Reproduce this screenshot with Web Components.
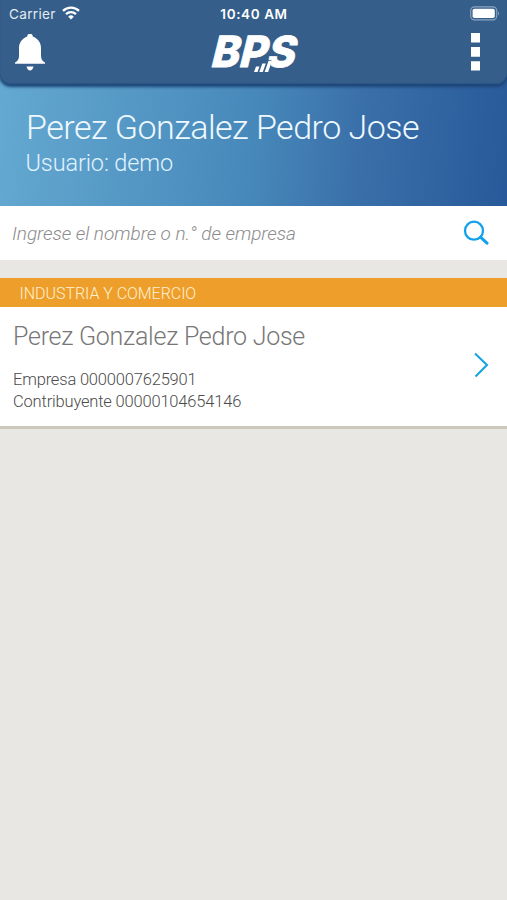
<!DOCTYPE html>
<html lang="es">
<head>
<meta charset="utf-8">
<title>BPS</title>
<style>
html,body{margin:0;height:100%}
body{background:#e8e7e3;font-family:Roboto,"Liberation Sans",sans-serif;font-weight:300}
</style>
</head>
<body>
<bps-app></bps-app>
<script>
const define = (name, html) => {
  const t = document.createElement('template');
  t.innerHTML = html;
  customElements.define(name, class extends HTMLElement {
    constructor() {
      super();
      this.attachShadow({mode: 'open'}).append(t.content.cloneNode(true));
    }
  });
};

define('status-bar', `
<style>
:host{display:grid;grid-template-columns:1fr auto 1fr;align-items:center;height:28px;padding:0 7px 0 9px;box-sizing:border-box;color:#fff;font:400 13.6px/28px Inter,"Liberation Sans",sans-serif}
.left{display:flex;align-items:center;gap:6px;color:#e3ebf3;letter-spacing:.3px}
.time{font-weight:600;font-size:13.5px;letter-spacing:.6px;margin-right:1px}
.battery{justify-self:end}
svg{display:block}
.left svg{margin-top:-2px}.battery{margin-top:-2px}
</style>
<div class="left"><span>Carrier</span>
<svg width="18" height="14" viewBox="0 0 18 14" fill="none" stroke="#fff" stroke-width="2.3"><path d="M1 4.900a11.500 11.500 0 0 1 16 0M4 8.100a7.200 7.200 0 0 1 10 0"/><path d="M9 13.600L6.200 10.700a4 4 0 0 1 5.600 0Z" fill="#fff" stroke="none"/></svg></div>
<span class="time">10:40 AM</span>
<svg class="battery" width="30" height="15" viewBox="0 0 30 15"><rect x=".7" y=".9" width="26" height="13" rx="3.8" fill="none" stroke="#8ba5c2" stroke-width="1.100"/><rect x="2.600" y="2.700" width="22.200" height="9.400" rx="1.800" fill="#fff"/><path d="M28 5.200q2 2.200 0 4.400z" fill="#8ba5c2"/></svg>`);

define('bps-logo', `
<style>:host{display:block}svg{display:block;overflow:visible}</style>
<svg width="87" height="38" viewBox="0 0 87 38">
<text transform="translate(-2.500 32) skewX(-14)" x="0" y="0" font-family="Inter" font-weight="800" font-size="43" textLength="84" lengthAdjust="spacingAndGlyphs" fill="#fff" stroke="#fff" stroke-width=".8">BPS</text>
<path d="M41.500 38L43 29.500H49L52 25H59.500L57.500 38Z" fill="#355e8a"/>
<path d="M42 37l2-5.500h3.500L45.500 37zM47.300 37l3-8.500h3.500L50.800 37zM52.600 37l4-11.300h3.500L56.100 37z" fill="#fff"/>
</svg>`);

define('app-header', `
<style>
:host{display:block;height:84px;box-sizing:border-box;background:#355e8a;border-radius:0 0 11px 11px;box-shadow:0 2px 3px 1px #1d4678,inset 0 -1px 1px #2d5786;position:relative}
.tools{display:grid;grid-template-columns:1fr auto 1fr;height:48px;padding:0 27px 0 15px;align-items:center}
bps-logo{margin:4px -8px 0 8px}
.menu{justify-self:end}
svg{display:block}
</style>
<status-bar></status-bar>
<div class="tools">
<svg width="30" height="37" viewBox="0 0 30 37" fill="#fff"><path d="M12.200 2.500a2.800 2.800 0 0 1 5.600 0C22.500 4.500 26 8 26 14v7c0 4 1 6 4 7.500v1.300H0V28.500c3-1.500 4-3.500 4-7.500v-7C4 8 7.500 4.500 12.200 2.500Z"/><path d="M11.500 32.500h7q-1 4-3.500 4t-3.500-4z"/></svg>
<bps-logo></bps-logo>
<svg class="menu" width="9" height="38" viewBox="0 0 9 38" fill="#fff"><path d="M0 0H9V9.500H0zM0 14H9V23.700H0zM0 28.200H9V37.500H0z"/></svg>
</div>`);

define('user-banner', `
<style>
:host{display:block;height:133px;margin-top:-11px;padding:33px 26px 0;box-sizing:border-box;background:linear-gradient(95deg,#64a9d1,#4788ba 50%,#3a70a9 70%,#28599a);color:#eef8ff}
h1{margin:0;font-weight:300;font-size:34px;line-height:42px;letter-spacing:-.52px;white-space:nowrap}
p{margin:1px 0 0 -.5px;font-size:23.500px;letter-spacing:-.12px;line-height:28px;color:#e0f3ff}
</style>
<h1><slot name="name"></slot></h1><p><slot name="user"></slot></p>`);

define('search-field', `
<style>
:host{display:flex;justify-content:space-between;align-items:center;height:54px;padding:0 18px 0 12px;box-sizing:border-box;background:#fff;color:#8c8c8c;font-size:19px;letter-spacing:-.06px;font-style:italic}
svg{display:block}
</style>
<span><slot></slot></span>
<svg width="26" height="26" viewBox="0 0 26 26" fill="none" stroke="#12a2ec"><circle cx="11" cy="10.700" r="9" stroke-width="2.300"/><path d="M17.500 17.200l6.500 6" stroke-width="3" stroke-linecap="round"/></svg>`);

define('company-card', `
<style>
:host{display:block;margin-top:18px;background:#fff;border-bottom:3px solid #cac9bb}
header{height:29px;padding:0 19.500px;background:#ee9f2b;color:#fff0d2;font-size:16px;letter-spacing:-.04px;line-height:31px}
.body{display:flex;justify-content:space-between;align-items:center;height:119px;padding:0 17px 0 13px;box-sizing:border-box}
h2{margin:0 0 15px;font-weight:300;font-size:25px;letter-spacing:-.26px;line-height:34px;color:#777}
.lines{font-size:16.500px;letter-spacing:-.18px;line-height:22px;color:#4c4c4c}
svg{display:block;margin:-4px 1px 0 0}
</style>
<header><slot name="sector"></slot></header>
<div class="body"><div><h2><slot name="name"></slot></h2><div class="lines"><slot></slot></div></div>
<svg width="16" height="26" viewBox="0 0 16 26" fill="none" stroke="#18a3e3" stroke-width="2.100"><path d="M2 1.500L14 13 2.500 24.500"/></svg></div>`);

define('bps-app', `
<style>:host{display:block;height:100vh;overflow:hidden;background:#e8e7e3}</style>
<app-header></app-header>
<user-banner><span slot="name">Perez Gonzalez Pedro Jose</span><span slot="user">Usuario: demo</span></user-banner>
<search-field>Ingrese el nombre o n.° de empresa</search-field>
<company-card><span slot="sector">INDUSTRIA Y COMERCIO</span><span slot="name">Perez Gonzalez Pedro Jose</span><div>Empresa 0000007625901</div><div>Contribuyente 00000104654146</div></company-card>`);
</script>
</body>
</html>
